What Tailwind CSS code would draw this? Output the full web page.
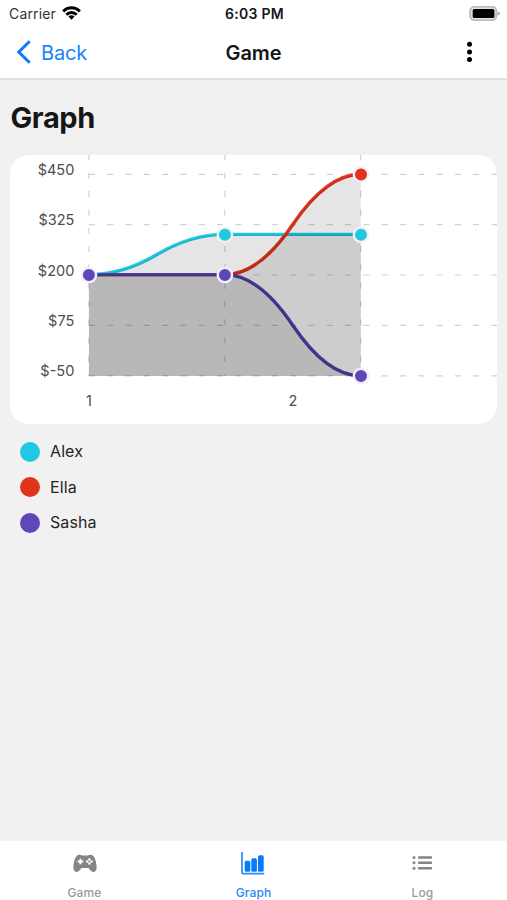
<!DOCTYPE html>
<html lang="en">
<head>
<meta charset="utf-8">
<title>Game</title>
<script src="https://cdn.jsdelivr.net/npm/@tailwindcss/browser@4"></script>
</head>
<body class="font-['Inter',sans-serif]">
<div class="flex h-[900px] w-[507px] flex-col overflow-hidden bg-[#f1f1f1] text-[#161618]">
  <header class="h-20 shrink-0 border-b-2 border-[#e2e2e2] bg-white">
    <div class="grid h-[27px] grid-cols-3 items-center pr-[7px] pl-[9px]">
      <div class="flex items-center gap-[6px] text-[14px] leading-none text-[#333]">
        <span class="tracking-[0.15px]">Carrier</span>
        <svg class="mb-[2px] h-[14px] w-[19px]" viewBox="0 0 19 14" fill="none" stroke="#000" stroke-width="2.900"><path d="M1.200 5.400C5.800.5 13.200.5 17.800 5.400M4.300 8.700c3-3 7.400-3 10.400 0"/><path d="M6.500 10.600q3-2.600 6 0L9.500 13.700z" fill="#000" stroke="none"/></svg>
      </div>
      <div class="text-center text-[14px] leading-none font-semibold whitespace-nowrap tracking-[0.3px]">6:03 PM</div>
      <svg class="h-[15px] w-[31px] justify-self-end" viewBox="0 0 31 15"><rect x="1.200" y=".9" width="26.200" height="13.200" rx="4" fill="#e4e4e4" stroke="#bdbdbd" stroke-width="1.900"/><rect x="3.700" y="3" width="21.700" height="9" rx="1.500"/><path d="M28.500 5.500q2.400.5 2.400 2t-2.400 2z" fill="#aaa"/></svg>
    </div>
    <div class="grid h-[51px] grid-cols-3 items-center pr-[34px] pl-4">
      <div class="flex items-center gap-[10px] text-[#1683fb]">
        <svg class="mb-[2px] h-6 w-[15px]" viewBox="0 0 15 24" fill="none" stroke="#087cff" stroke-width="3"><path d="M13.700 1.300 2.800 12l10.900 10.700"/></svg>
        <span class="text-[20px] tracking-[-0.15px]">Back</span>
      </div>
      <div class="pl-[18px] text-center text-[20px] font-semibold tracking-[-0.1px]">Game</div>
      <svg class="mb-px h-6 w-[7px] justify-self-end" viewBox="0 0 7 24"><circle cx="3.500" cy="4.200" r="2.500"/><circle cx="3.500" cy="12" r="2.500"/><circle cx="3.500" cy="19.600" r="2.500"/></svg>
    </div>
  </header>

  <main class="flex-1 px-[10px] pt-[18px]">
    <h1 class="pl-[0.5px] text-[29px] leading-[40px] font-bold tracking-[-0.4px]">Graph</h1>
    <div class="mt-[17px] h-[269px] w-[487px] overflow-hidden rounded-[19px] bg-white">
      <svg class="block h-[269px] w-[487px]" viewBox="10 155 487 269" fill="none">
        <g stroke="#d2d2d2" stroke-width="1.200" stroke-dasharray="6.100 12.200">
          <path d="M88.900 174.300H498M88.900 224.700H498M88.900 275H498M88.900 325.400H498M88.900 375.800H498"/>
          <path d="M88.900 154.500V376M224.800 154.500V376M360.700 154.500V376"/>
        </g>
        <g stroke-width="3.400">
          <path stroke="#1fc9e1" d="M88.900 274.600Q122.900 274.600 156.900 254.500T224.900 234.400H360.800"/>
          <path stroke="#e0341b" d="M88.900 274.600H224.900Q258.900 274.600 292.800 224.500T360.800 174.300"/>
          <path stroke="#5b44b4" d="M88.900 274.600H224.900Q258.900 274.600 292.800 325.200T360.800 375.800"/>
        </g>
        <g fill="#000" fill-opacity=".101">
          <path d="M88.900 274.600Q122.900 274.600 156.900 254.500T224.900 234.400H360.800V376H88.900z"/>
          <path d="M88.900 274.600H224.900Q258.900 274.600 292.800 224.500T360.800 174.300V376H88.900z"/>
          <path d="M88.900 274.600H224.900Q258.900 274.600 292.800 325.200T360.800 375.800V376H88.900z"/>
        </g>
        <g stroke="#f3effa" stroke-width="2.400">
          <g fill="#1fc9e1"><circle cx="224.900" cy="234.800" r="7.200"/><circle cx="361" cy="234.800" r="7.200"/></g>
          <circle cx="361" cy="174.400" r="7.200" fill="#e0341b"/>
          <g fill="#6047b9"><circle cx="88.900" cy="275" r="7.200"/><circle cx="224.900" cy="275" r="7.200"/><circle cx="361" cy="376" r="7.200"/></g>
        </g>
        <g fill="#4d4d4d" font-size="14.500" text-anchor="end">
          <text x="74.300" y="174.800">$450</text>
          <text x="74.300" y="225">$325</text>
          <text x="74.300" y="275.600">$200</text>
          <text x="74.300" y="325.900">$75</text>
          <text x="74.300" y="376.200">$-50</text>
        </g>
        <g fill="#4d4d4d" font-size="14.500" text-anchor="middle"><text x="89" y="405.500">1</text><text x="293" y="405.500">2</text></g>
      </svg>
    </div>
    <ul class="mt-[10px] pl-[10px] text-[16px] leading-[35.500px] tracking-[0.1px] text-[#252525]">
      <li class="flex items-center gap-[10px]"><span class="size-5 rounded-full bg-[#1fc9e1]"></span>Alex</li>
      <li class="flex items-center gap-[10px]"><span class="size-5 rounded-full bg-[#e0341b]"></span>Ella</li>
      <li class="flex items-center gap-[10px]"><span class="size-5 rounded-full bg-[#6047b9]"></span>Sasha</li>
    </ul>
  </main>

  <nav class="grid h-[59px] shrink-0 grid-cols-3 bg-white text-[12px] leading-[16px] font-medium text-[#9a9a9a]">
    <div class="flex flex-col items-center pt-[9px]">
      <svg class="h-7 w-7" viewBox="0 0 28 28"><path fill="#858585" d="M8.300 4.800c1.300 0 1.800.7 2.800.7h5.800c1 0 1.500-.7 2.800-.7 3.900 0 5.900 7.200 5.900 13 0 4.300-3.800 5.600-6.200 2.500l-1.900-2.300h-7l-1.900 2.300c-2.400 3.100-6.200 1.800-6.200-2.500 0-5.800 2-13 5.900-13z"/><path d="M6.600 11.500h5.600M9.400 8.700v5.600" stroke="#fff" stroke-width="1.900"/><g fill="#fff"><circle cx="18.300" cy="9.400" r="1.250"/><circle cx="18.300" cy="13.600" r="1.250"/><circle cx="16.200" cy="11.500" r="1.250"/><circle cx="20.400" cy="11.500" r="1.250"/></g></svg>
      <span class="mt-[7px] tracking-[0.1px]">Game</span>
    </div>
    <div class="flex flex-col items-center pt-[9px] text-[#2589f6]">
      <svg class="h-7 w-7" viewBox="0 0 28 28"><path d="M2 2v20q0 1.700 1.700 1.700h20.500" fill="none" stroke="#2c8bf5" stroke-width="1.700"/><g fill="#087cff"><rect x="4.700" y="10.800" width="5.600" height="11" rx="1.600"/><rect x="11.300" y="8.300" width="5.600" height="13.500" rx="1.600"/><rect x="18" y="5.300" width="5.700" height="16.500" rx="1.600"/></g></svg>
      <span class="mt-[7px] tracking-[0.1px]">Graph</span>
    </div>
    <div class="flex flex-col items-center pt-[9px]">
      <svg class="h-7 w-7" viewBox="0 0 28 28"><g fill="#858585"><circle cx="5" cy="7.500" r="1.500"/><circle cx="5" cy="12.800" r="1.500"/><circle cx="5" cy="18.200" r="1.500"/></g><path d="M10 7.500h12M10 12.800h12M10 18.200h12" stroke="#858585" stroke-width="2.400" stroke-linecap="round"/></svg>
      <span class="mt-[7px] tracking-[0.1px]">Log</span>
    </div>
  </nav>
</div>
</body>
</html>
